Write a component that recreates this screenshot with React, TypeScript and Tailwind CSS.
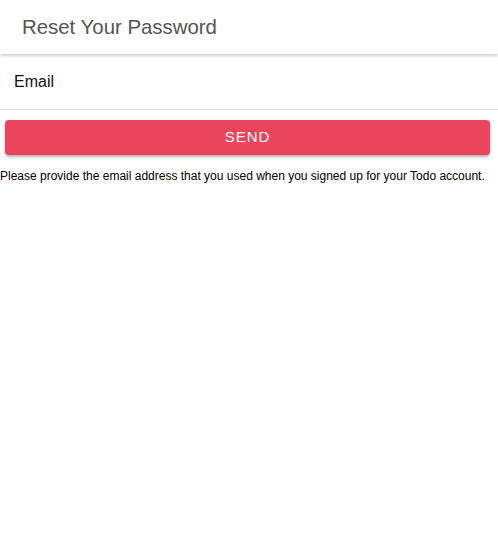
import React from 'react';

const App = () => {
  return (
    <div className="min-h-[557px] w-full bg-white font-['Liberation_Sans',Arial,sans-serif]">
      <header className="flex h-[54px] items-center pl-[22px] shadow-[0_2px_3px_rgba(0,0,0,0.18)]">
        <h1 className="text-[20.4px] text-[#555555]">Reset Your Password</h1>
      </header>
      <div className="flex h-[56px] items-center border-b border-[#dddddd] pl-[14px]">
        <span className="text-[16px] text-[#111111]">Email</span>
      </div>
      <div className="px-[5px] pt-[10px]">
        <button className="h-[35px] w-[485px] rounded-[4px] bg-[#ec445d] text-[15px] tracking-[1px] text-white shadow-[0_2px_3px_rgba(0,0,0,0.3)]">
          SEND
        </button>
      </div>
      <p className="mt-[12px] text-[12px] text-black">
        Please provide the email address that you used when you signed up for your Todo account.
      </p>
    </div>
  );
};

export default App;
